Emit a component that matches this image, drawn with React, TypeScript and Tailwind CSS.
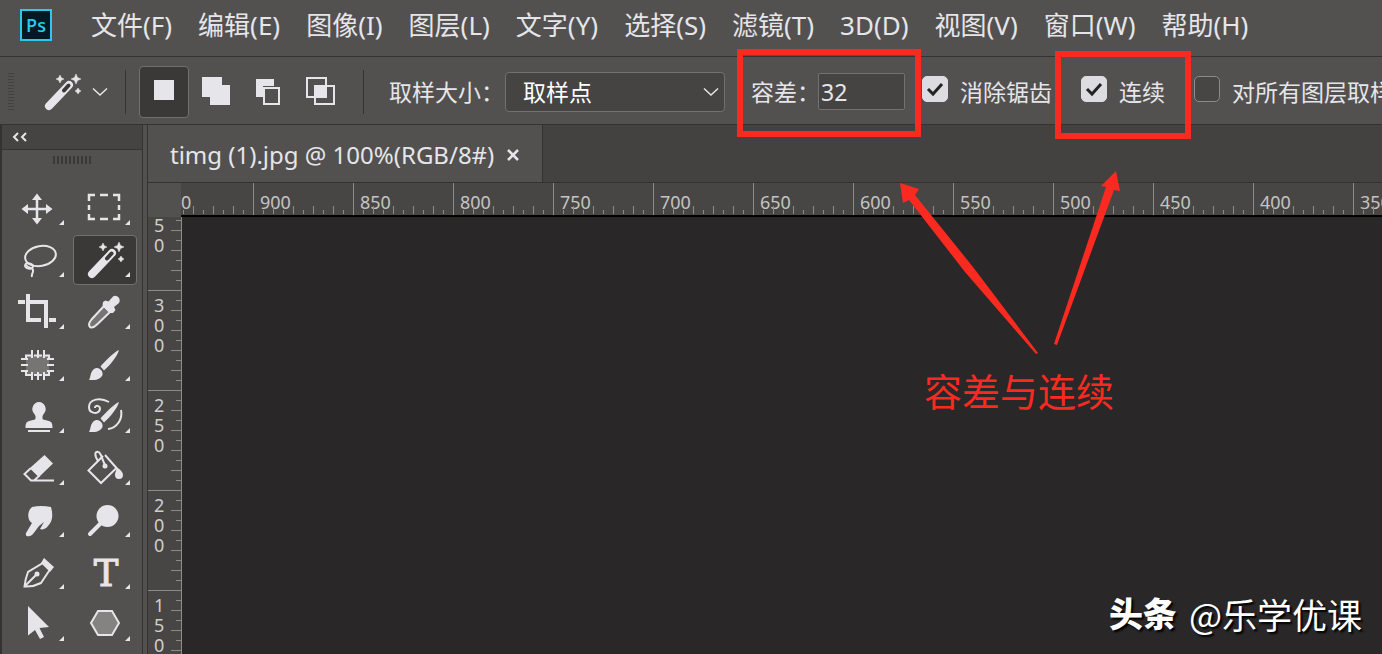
import { useState, type ReactNode } from "react";

const MENUS = [
  "文件(F)",
  "编辑(E)",
  "图像(I)",
  "图层(L)",
  "文字(Y)",
  "选择(S)",
  "滤镜(T)",
  "3D(D)",
  "视图(V)",
  "窗口(W)",
  "帮助(H)",
];

const H_LABELS = [900, 850, 800, 750, 700, 650, 600, 550, 500, 450, 400, 350];
const V_LABELS = [300, 250, 200, 150];
const TICKS = [10, 20, 30, 40, 50, 60, 70, 80, 90];

const WandShape = () => (
  <>
    <path d="M19 39 L39 18" stroke="currentColor" strokeWidth="8" strokeLinecap="round" />
    <path d="M34 23.500 L38.500 18.500" stroke="#3b3a39" strokeWidth="4" strokeLinecap="round" />
    <path
      d="M30 8 L31.300 10.700 L34 12 L31.300 13.300 L30 16 L28.700 13.300 L26 12 L28.700 10.700 Z M46 7 L47.500 10.500 L51 12 L47.500 13.500 L46 17 L44.500 13.500 L41 12 L44.500 10.500 Z M48 21 L49.300 23 L51 24 L49.300 25 L48 27 L46.700 25 L45 24 L46.700 23 Z"
      fill="currentColor"
      stroke="currentColor"
      strokeWidth="0.500"
    />
  </>
);

const BrushShape = () => (
  <>
    <path d="M46 11 C41 13 32 22 27.500 27.500 L31 31.500 C37 26 44 18 46 11 Z" fill="currentColor" />
    <path d="M16 41 C18 38 17 34 20 31 C23 28 26 29 28 31 C30.500 34 30 37 27 39 C24 41.500 20 41 16 41 Z" fill="currentColor" />
  </>
);

const TOOLS: { name: string; art: ReactNode }[] = [
  {
    name: "移动工具",
    art: (
      <>
        <path d="M30 14 V38 M18 26 H42" stroke="currentColor" strokeWidth="2.500" />
        <path d="M30 10.500 L35 17 H25 Z M30 41.500 L35 35 H25 Z M14.500 26 L21 21 V31 Z M45.500 26 L39 21 V31 Z" fill="currentColor" />
      </>
    ),
  },
  {
    name: "矩形选框工具",
    art: (
      <path
        d="M16 18 V12 H22 M27 12 H35 M40 12 H46 V18 M46 22 V27 M46 31 V36 H40 M35 36 H27 M22 36 H16 V31 M16 27 V22"
        stroke="currentColor"
        strokeWidth="2.500"
      />
    ),
  },
  {
    name: "套索工具",
    art: (
      <g stroke="currentColor" strokeWidth="2">
        <ellipse cx="33.500" cy="21" rx="15.500" ry="10" transform="rotate(-10 33.500 21)" />
        <ellipse cx="22" cy="31" rx="4" ry="2.500" transform="rotate(15 22 31)" />
        <path d="M19 30 C22 34 27 32 26 36 C26 39 24 39 25 42" />
      </g>
    ),
  },
  { name: "魔棒工具", art: <WandShape /> },
  {
    name: "裁剪工具",
    art: <path d="M21 7 V33 H34 M23 15 H39 V41 M11 15 H18 M42 33 H49" stroke="currentColor" strokeWidth="4" />,
  },
  {
    name: "吸管工具",
    art: (
      <>
        <path d="M31 19 L37 25 L24 37.500 C22 39.500 19 41 17 40 C15 38 16.500 35 18.500 32.500 Z" fill="#777574" stroke="currentColor" strokeWidth="2" />
        <path d="M40 9.500 C44 7 48.500 12 46 16 L41 20 L42.500 23 L40 26 L36.500 26 L29.500 18.500 L30 15 L32.500 13.500 L35.500 14.500 Z" fill="currentColor" />
      </>
    ),
  },
  {
    name: "修补工具",
    art: (
      <>
        <rect x="19" y="16.500" width="23" height="19" rx="2" fill="#777574" />
        <path
          d="M24 16.500 H19 V21 M37 16.500 H42 V21 M19 31 V36 H24 M37 36 H42 V31 M25 11 V19 M31 11 V19 M37 11 V19 M25 33 V41 M31 33 V41 M37 33 V41 M14 20 H21 M14 26 H21 M14 32 H21 M40 20 H47 M40 26 H47 M40 32 H47 M27 16.500 H35 M27 36 H35"
          stroke="currentColor"
          strokeWidth="2"
        />
      </>
    ),
  },
  { name: "画笔工具", art: <BrushShape /> },
  {
    name: "仿制图章工具",
    art: (
      <path
        d="M32 11 A7 7 0 0 1 37 22.500 C35 25 35 27 36 28.500 L42 30 C45 31 45.500 33 45.500 37 H18.500 C18.500 33 19 31 22 30 L28 28.500 C29 27 29 25 27 22.500 A7 7 0 0 1 32 11 Z M21 39 H43 V41 H21 Z"
        fill="currentColor"
      />
    ),
  },
  {
    name: "历史记录画笔工具",
    art: (
      <>
        <BrushShape />
        <path
          d="M36 11 C27 6 16 8 16 16 C16 23 26 24 27 18 C27 14 22 14 22 17 M48 19 C50 28 44 37 35 38"
          stroke="currentColor"
          strokeWidth="2"
        />
      </>
    ),
  },
  {
    name: "橡皮擦工具",
    art: (
      <>
        <path d="M37.500 12 L46 20.500 L32.500 33.500 L23.500 24.500 Z" fill="currentColor" />
        <path d="M24 25 L17.500 31 L24 37.500 H47 M24 25 L32 33 L27 37.500" stroke="currentColor" strokeWidth="2" />
      </>
    ),
  },
  {
    name: "油漆桶工具",
    art: (
      <>
        <path d="M30 13 L15.500 27.500 L28 40 L43.500 25 L32 12" stroke="currentColor" strokeWidth="2" />
        <path d="M25 18 C21 12 22 8 25 9 C28 9 28 14 32 22" stroke="currentColor" strokeWidth="2" />
        <circle cx="32" cy="23" r="2.500" fill="currentColor" />
        <path d="M43 24 C47 26 50 29 50 32 A4 4 0 0 1 42 32 C42 29 44 28 43 24 Z" fill="currentColor" />
      </>
    ),
  },
  {
    name: "涂抹工具",
    art: (
      <path
        d="M25 12 C32 10.500 38 11 44 12 C46 19 46 26 41 31 C39 34 35 35 33 34 L37 27 L32 31 C29 35 27 38 25 40 C22 42 18 42 19 38 L25 28 C20 25 20 16 25 12 Z"
        fill="currentColor"
      />
    ),
  },
  {
    name: "减淡工具",
    art: (
      <>
        <circle cx="34.500" cy="21" r="11" fill="currentColor" />
        <path d="M28 28 L17 39" stroke="currentColor" strokeWidth="4" strokeLinecap="round" />
      </>
    ),
  },
  {
    name: "钢笔工具",
    art: (
      <>
        <path d="M17.500 39.500 C18 35 19 30 21 25 L36 16 L43 22.500 L34 36 C30 38 24 40 17.500 39.500 Z M18 39 L29 28" stroke="currentColor" strokeWidth="2" />
        <circle cx="30" cy="27" r="2.500" fill="currentColor" />
        <path d="M37 11 L47 20 L43 25 L34 16 Z" fill="currentColor" />
      </>
    ),
  },
  {
    name: "文字工具",
    art: (
      <text
        x="33"
        y="39"
        textAnchor="middle"
        fill="currentColor"
        stroke="currentColor"
        strokeWidth="1"
        fontFamily="DejaVu Serif, serif"
        fontSize="37"
      >
        T
      </text>
    ),
  },
  {
    name: "路径选择工具",
    art: <path d="M21 7 L42 28 L32.500 29 L37 38 L33 40 L28 31 L21 36.500 Z" fill="currentColor" />,
  },
  {
    name: "多边形工具",
    art: <path d="M25 12 H39 L46 24 L39 36 H25 L18 24 Z" fill="#858382" stroke="currentColor" strokeWidth="2" />,
  },
];

const MODES: { name: string; art: ReactNode }[] = [
  { name: "新选区", art: <path d="M15 14 H35 V34 H15 Z" fill="currentColor" /> },
  { name: "添加到选区", art: <path d="M11 11 H31 V19 H39 V39 H19 V31 H11 Z" fill="currentColor" /> },
  {
    name: "从选区减去",
    art: (
      <>
        <path d="M13 13 H31 V20 H20 V31 H13 Z" fill="currentColor" />
        <path d="M21 22 H36 V38 H21 Z" stroke="currentColor" strokeWidth="2" />
      </>
    ),
  },
  {
    name: "与选区交叉",
    art: (
      <>
        <path d="M12 12 H31 V31 H12 Z M20 20 H39 V38 H20 Z" stroke="currentColor" strokeWidth="2" />
        <path d="M20 20 H31 V31 H20 Z" fill="currentColor" />
      </>
    ),
  },
];

const Chevron = () => (
  <svg width="16" height="10" viewBox="0 0 16 10" fill="none" className="shrink-0">
    <path d="M1 1.500 L8 8 L15 1.500" stroke="currentColor" strokeWidth="1.500" />
  </svg>
);

const Divider = () => <div className="h-11 w-px shrink-0 bg-[#343332]" />;

function CheckOption({ label, defaultChecked }: { label: string; defaultChecked?: boolean }) {
  return (
    <label className="flex shrink-0 items-center gap-3">
      <span className="-mt-1.5 grid">
        <input
          type="checkbox"
          defaultChecked={defaultChecked}
          className="peer col-start-1 row-start-1 size-[26px] appearance-none rounded-[5px] border border-[#8d8b8a] bg-[#474645] checked:border-[#dddce0] checked:bg-[#dddce0]"
        />
        <svg
          width="26"
          height="26"
          viewBox="0 0 26 26"
          fill="none"
          className="pointer-events-none invisible col-start-1 row-start-1 peer-checked:visible"
        >
          <path d="M6 13 L11 18 L20 8" stroke="#252424" strokeWidth="3" />
        </svg>
      </span>
      <span>{label}</span>
    </label>
  );
}

function MenuBar() {
  return (
    <header className="flex h-[57px] shrink-0 items-center border-b border-[#343332] pb-1.5 pl-5">
      <div className="flex size-8 shrink-0 items-center justify-center border-2 border-[#2cc8ee] bg-[#031a24] font-['Open_Sans',sans-serif] text-[18px] leading-none font-semibold text-[#2cc8ee]">
        Ps
      </div>
      <nav className="ml-[39px] flex gap-[26px] text-[26px] leading-8 whitespace-nowrap">
        {MENUS.map((m) => (
          <button key={m}>{m}</button>
        ))}
      </nav>
    </header>
  );
}

function OptionsBar() {
  const [mode, setMode] = useState(0);

  return (
    <div className="flex h-[68px] shrink-0 items-center overflow-hidden border-b border-[#343332] pt-0.5 pl-2 text-[23px] leading-8 whitespace-nowrap">
      <svg width="6" height="38" viewBox="0 0 6 38" fill="none" className="shrink-0">
        <path d="M3 0 V38" stroke="#434241" strokeWidth="6" strokeDasharray="1 2" />
      </svg>
      <button aria-label="魔棒工具" className="ml-7 flex shrink-0 items-center gap-2">
        <svg width="42" height="50" viewBox="12 0 42 50" fill="none">
          <WandShape />
        </svg>
        <Chevron />
      </button>
      <div className="ml-[17px] flex shrink-0 items-center gap-[13px]">
        <Divider />
        <div className="flex gap-0.5">
          {MODES.map((m, i) => (
            <button
              key={m.name}
              aria-label={m.name}
              onClick={() => setMode(i)}
              className={
                i === mode
                  ? "h-[52px] w-[50px] rounded-[4px] border border-[#737170] bg-[#3a3938]"
                  : "h-[52px] w-[50px] border border-transparent"
              }
            >
              <svg width="48" height="50" viewBox="1 1 48 50" fill="none">
                {m.art}
              </svg>
            </button>
          ))}
        </div>
      </div>
      <div className="ml-[18px]">
        <Divider />
      </div>
      <label htmlFor="sample" className="ml-[25px] w-[116px] shrink-0">
        取样大小：
      </label>
      <div className="grid shrink-0 items-center">
        <select
          id="sample"
          className="col-start-1 row-start-1 h-10 w-[220px] appearance-none rounded-[4px] border border-[#737170] bg-[#454443] px-[17px] text-white"
        >
          <option>取样点</option>
        </select>
        <div className="pointer-events-none col-start-1 row-start-1 mr-1.5 justify-self-end">
          <Chevron />
        </div>
      </div>
      <label htmlFor="tolerance" className="ml-[26px] w-[67px] shrink-0">
        容差：
      </label>
      <input
        id="tolerance"
        type="text"
        defaultValue="32"
        className="mr-[17px] h-[37px] w-[87px] shrink-0 rounded-[2px] border border-[#737170] bg-[#454443] px-0.5"
      />
      <div className="flex gap-[29px]">
        <CheckOption label="消除锯齿" defaultChecked />
        <CheckOption label="连续" defaultChecked />
        <CheckOption label="对所有图层取样" />
      </div>
    </div>
  );
}

function Toolbox() {
  const [active, setActive] = useState("魔棒工具");

  return (
    <aside className="flex w-[143px] shrink-0 flex-col border-x border-l-2 border-[#343332]">
      <div className="flex h-[25px] shrink-0 items-center border-b border-[#343332] bg-[#454443] pl-2.5">
        <button aria-label="折叠">
          <svg width="15" height="10" viewBox="0 0 15 10" fill="none">
            <path d="M6 1 L2 5 L6 9 M14 1 L10 5 L14 9" stroke="currentColor" strokeWidth="2" />
          </svg>
        </button>
      </div>
      <div className="flex h-[33px] shrink-0 items-start justify-center pt-1.5">
        <svg width="38" height="8" viewBox="0 0 38 8" fill="none">
          <path d="M0 4 H38" stroke="#3a3938" strokeWidth="8" strokeDasharray="2 2" />
        </svg>
      </div>
      <div className="grid grid-cols-[64px_64px] gap-0.5 pl-[5px]">
        {TOOLS.map((t) => (
          <button
            key={t.name}
            aria-label={t.name}
            onClick={() => setActive(t.name)}
            className={
              t.name === active
                ? "h-[50px] rounded-[4px] border border-[#737170] bg-[#3a3938]"
                : "h-[50px] border border-transparent"
            }
          >
            <svg width="62" height="48" viewBox="1 1 62 48" fill="none">
              {t.art}
              <path d="M57 37 V42 H52 Z" fill="currentColor" />
            </svg>
          </button>
        ))}
      </div>
    </aside>
  );
}

const HTicks = () =>
  TICKS.map((t) => <path key={t} d={t % 20 ? `M${t}.5 27 V31` : `M${t}.5 23 V31`} stroke="#8d8b8a" />);

const VTicks = () =>
  TICKS.map((t) => <path key={t} d={t % 20 ? `M28 ${t}.5 H33` : `M23 ${t}.5 H33`} stroke="#8d8b8a" />);

function HorizontalRuler() {
  return (
    <div className="flex min-w-0 flex-1 overflow-hidden border-b-2 border-black bg-[#474645] text-[18px] leading-[26px]">
      {/* the scrolled-off step shows only its last digit */}
      <div className="grid h-8 w-[72px] shrink-0">
        <span className="col-start-1 row-start-1 pt-1.5">0</span>
        <svg width="72" height="32" viewBox="28 0 72 32" className="col-start-1 row-start-1">
          <HTicks />
        </svg>
      </div>
      {H_LABELS.map((n) => (
        <div key={n} className="grid h-8 w-[100px] shrink-0 border-l border-[#8d8b8a]">
          <span className="col-start-1 row-start-1 pt-1.5 pl-1.5">{n}</span>
          <svg width="99" height="32" viewBox="1 0 99 32" className="col-start-1 row-start-1">
            <HTicks />
          </svg>
        </div>
      ))}
    </div>
  );
}

const Digits = ({ value }: { value: string }) => (
  <>
    {value.split("").map((d, i) => (
      <span key={i}>{d}</span>
    ))}
  </>
);

function VerticalRuler() {
  return (
    <div className="w-[34px] shrink-0 overflow-hidden border-r border-[#8d8b8a] bg-[#474645] text-[18px] leading-5">
      <div className="grid h-[73px]">
        <span className="col-start-1 row-start-1 -mt-0.5 flex flex-col pl-1.5">
          <Digits value="50" />
        </span>
        <svg width="33" height="73" viewBox="0 27 33 73" className="col-start-1 row-start-1">
          <VTicks />
        </svg>
      </div>
      {V_LABELS.map((n) => (
        <div key={n} className="grid h-[100px] border-t border-[#8d8b8a]">
          <span className="col-start-1 row-start-1 flex flex-col pt-1 pl-1.5">
            <Digits value={String(n)} />
          </span>
          <svg width="33" height="99" viewBox="0 1 33 99" className="col-start-1 row-start-1">
            <VTicks />
          </svg>
        </div>
      ))}
    </div>
  );
}

function Workspace() {
  return (
    <main className="ml-1 flex min-w-0 flex-1 flex-col border-l border-[#343332]">
      <div className="flex h-[58px] shrink-0 border-b border-[#343332] bg-[#434241]">
        <div className="flex items-center gap-3 border-r border-[#343332] bg-[#525150] pt-0.5 pr-[22px] pl-[22px] text-[24px] leading-8 whitespace-nowrap">
          <span>timg (1).jpg @ 100%(RGB/8#)</span>
          <button aria-label="关闭">
            <svg width="14" height="14" viewBox="0 0 14 14">
              <path d="M2 2 L12 12 M12 2 L2 12" stroke="currentColor" strokeWidth="2.500" />
            </svg>
          </button>
        </div>
      </div>
      <div className="flex h-[34px] shrink-0 text-[#c6c4c3]">
        <div className="w-[33px] shrink-0 bg-[#525150]" />
        <HorizontalRuler />
      </div>
      <div className="flex min-h-0 flex-1 text-[#d0cecd]">
        <VerticalRuler />
        <div className="flex flex-1 items-end justify-end bg-[#292727] pr-5 pb-4">
          <p className="flex items-center gap-3 leading-[48px] whitespace-nowrap text-white [text-shadow:2px_2px_2px_#000]">
            <span className="text-[34px] font-black">头条</span>
            <span className="font-['Noto_Sans_CJK_SC',sans-serif] text-[35px]">@乐学优课</span>
          </p>
        </div>
      </div>
    </main>
  );
}

// Red call-outs drawn over the tolerance and contiguous options
function Annotations() {
  return (
    <div className="pointer-events-none absolute inset-0 overflow-hidden text-[#fb2a20]">
      <div className="absolute top-[49px] left-[737px] h-[88px] w-[184px] border-6 border-current" />
      <div className="absolute top-[51px] left-[1055px] h-[88px] w-[136px] border-6 border-current" />
      <svg width="230" height="190" viewBox="895 168 230 190" fill="currentColor" className="absolute top-[168px] left-[895px]">
        <path d="M900 183 L919 189 L915 195 L973 267 L1038 353 L1036 354 L965 272 L909 200 L903 203 Z" />
        <path d="M1116 171 L1120 191 L1114 190 L1057 345 L1054 344 L1106 187 L1101 186 Z" />
      </svg>
      <p className="absolute top-[366px] left-[924px] text-[38px] leading-[50px] whitespace-nowrap">容差与连续</p>
    </div>
  );
}

export default function App() {
  return (
    <div className="relative flex h-screen flex-col overflow-hidden bg-[#525150] font-['Noto_Sans','Noto_Sans_CJK_SC',sans-serif] text-[#e6e5e9]">
      <MenuBar />
      <OptionsBar />
      <div className="flex min-h-0 flex-1">
        <Toolbox />
        <Workspace />
      </div>
      <Annotations />
    </div>
  );
}
